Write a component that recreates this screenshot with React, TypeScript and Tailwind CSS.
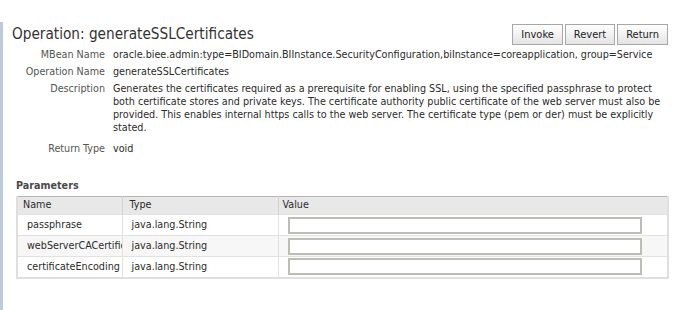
const details = [
  { label: "MBean Name", lines: ["oracle.biee.admin:type=BIDomain.BIInstance.SecurityConfiguration,biInstance=coreapplication, group=Service"] },
  { label: "Operation Name", lines: ["generateSSLCertificates"] },
  {
    label: "Description",
    lines: [
      "Generates the certificates required as a prerequisite for enabling SSL, using the specified passphrase to protect",
      "both certificate stores and private keys. The certificate authority public certificate of the web server must also be",
      "provided. This enables internal https calls to the web server. The certificate type (pem or der) must be explicitly",
      "stated.",
    ],
  },
  { label: "Return Type", lines: ["void"] },
];

const params = [
  { name: "passphrase", type: "java.lang.String" },
  { name: "webServerCACertificatePath", type: "java.lang.String" },
  { name: "certificateEncoding", type: "java.lang.String" },
];

const buttonClass =
  "h-[21px] px-[8px] border border-[#a7a7a7] bg-gradient-to-b from-white to-[#e4e4e4] text-[11px] leading-none text-[#222]";

export default function App() {
  return (
    <div className="w-[692px] h-[310px] bg-white overflow-hidden font-['DejaVu_Sans_Condensed','DejaVu_Sans',sans-serif] text-[10.7px] text-[#2b2b2b]">
      <div className="mt-[22px] h-[288px] border-l-[3px] border-[#bccbdb] pl-[9px] pr-[24px]">
        <div className="flex items-start justify-between">
          <h1 className="mt-[4px] text-[15.2px] leading-[17px] text-[#333]">Operation: generateSSLCertificates</h1>
          <div className="mt-[2px] flex gap-[2px]">
            <button className={buttonClass}>Invoke</button>
            <button className={buttonClass}>Revert</button>
            <button className={buttonClass}>Return</button>
          </div>
        </div>

        <div className="mt-[3px] flex flex-col gap-[4px]">
          {details.map((d) => (
            <div key={d.label} className={`flex gap-[8px] leading-[13px] ${d.label === "Description" ? "mb-[4px]" : ""}`}>
              <div className="w-[93px] shrink-0 text-right text-[#555]">{d.label}</div>
              <div className="whitespace-nowrap">
                {d.lines.map((l) => (
                  <div key={l}>{l}</div>
                ))}
              </div>
            </div>
          ))}
        </div>

        <div className="pl-[4px] mt-[24px]">
          <div className="font-bold text-[#4a4a4a] leading-[13px]">Parameters</div>
          <table className="mt-[4px] w-[653px] table-fixed border-collapse border-t border-t-[#b4b4ba] border-x-2 border-b-2 border-x-[#dfdfdf] border-b-[#dfdfdf]">
            <colgroup>
              <col className="w-[105px]" />
              <col className="w-[156px]" />
              <col />
            </colgroup>
            <thead>
              <tr className="h-[18px] bg-[#e8e8e8]">
                <th className="border-r border-[#d4d4d4] pl-[5px] text-left font-normal">Name</th>
                <th className="border-r border-[#d4d4d4] pl-[7px] text-left font-normal">Type</th>
                <th className="pl-[4px] text-left font-normal">Value</th>
              </tr>
            </thead>
            <tbody>
              {params.map((p, i) => (
                <tr key={p.name} className={`h-[21px] border-t border-[#e2e2e2] ${i === 1 ? "bg-[#f7f7f7]" : "bg-white"}`}>
                  <td className="border-r border-[#e2e2e2] pl-[9px]">
                    <div className="overflow-hidden whitespace-nowrap">{p.name}</div>
                  </td>
                  <td className="border-r border-[#e2e2e2] pl-[9px] whitespace-nowrap">{p.type}</td>
                  <td className="pl-[9px]">
                    <div className="w-[354px] h-[17px] border-2 border-[#bdbdb5] bg-white" />
                  </td>
                </tr>
              ))}
            </tbody>
          </table>
        </div>
      </div>
    </div>
  );
}
